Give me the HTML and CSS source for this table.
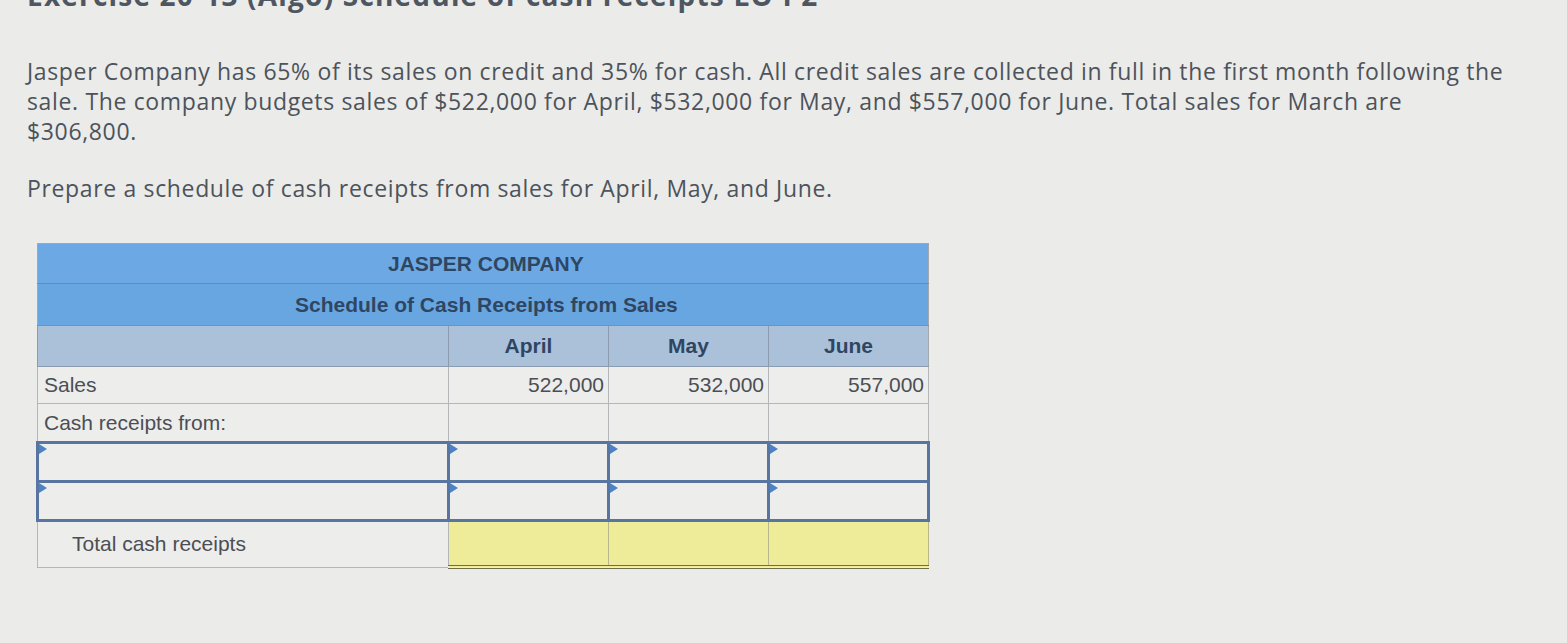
FILE: index.html
```html
<!DOCTYPE html>
<html>
<head>
<meta charset="utf-8">
<link rel="stylesheet" href="styles.css">
</head>
<body>
<div class="page">
  <h2 class="title">Exercise 20-13 (Algo) Schedule of cash receipts LO P2</h2>
  <p class="intro">Jasper Company has 65% of its sales on credit and 35% for cash. All credit sales are collected in full in the first month following the sale. The company budgets sales of $522,000 for April, $532,000 for May, and $557,000 for June. Total sales for March are $306,800.</p>
  <p class="task">Prepare a schedule of cash receipts from sales for April, May, and June.</p>
  <table class="sched">
    <colgroup>
      <col class="c-label"><col class="c-num"><col class="c-num"><col class="c-num">
    </colgroup>
    <tr class="r-h1"><th colspan="4">JASPER COMPANY</th></tr>
    <tr class="r-h2"><th colspan="4">Schedule of Cash Receipts from Sales</th></tr>
    <tr class="r-h3"><th></th><th>April</th><th>May</th><th>June</th></tr>
    <tr class="r-sales"><td class="lbl">Sales</td><td class="num">522,000</td><td class="num">532,000</td><td class="num">557,000</td></tr>
    <tr class="r-cash"><td class="lbl">Cash receipts from:</td><td></td><td></td><td></td></tr>
    <tr class="r-in"><td class="in"></td><td class="in"></td><td class="in"></td><td class="in"></td></tr>
    <tr class="r-in"><td class="in"></td><td class="in"></td><td class="in"></td><td class="in"></td></tr>
    <tr class="r-total"><td class="lbl indent">Total cash receipts</td><td class="tot"></td><td class="tot"></td><td class="tot"></td></tr>
  </table>
</div>
</body>
</html>
```
FILE: styles.css
```css
html, body {
  margin: 0;
  padding: 0;
  background: #ebebe9;
}
.page {
  padding: 0 0 0 27px;
  font-family: "Open Sans", "Liberation Sans", sans-serif;
  color: #4d535b;
  overflow: hidden;
  height: 643px;
}
.title {
  margin: -22px 0 44px 0;
  font-size: 28px;
  line-height: 34px;
  font-weight: 700;
  letter-spacing: 1.2px;
  color: #4e5662;
  white-space: nowrap;
}
.intro {
  margin: 0;
  width: 1482px;
  font-size: 23px;
  letter-spacing: 0.65px;
  line-height: 30px;
}
.task {
  margin: 27px 0 0 0;
  font-size: 23px;
  letter-spacing: 0.65px;
  line-height: 30px;
}
.sched {
  margin: 40px 0 0 9px;
  border-collapse: collapse;
  font-family: "Liberation Sans", Arial, sans-serif;
  font-size: 21px;
  table-layout: fixed;
  width: 892px;
  border: 1px solid #a4a8ad;
}
.c-label { width: 411px; }
.c-num { width: 160px; }
.sched th {
  font-weight: 700;
  color: #2f4663;
  padding: 0;
}
.r-h1 th {
  height: 39px;
  background: #6ca9e4;
  border-bottom: 1px solid #5d8fc4;
}
.r-h2 th {
  height: 41px;
  background: #68a6e2;
  border-bottom: 1px solid #7891ad;
}
.r-h1 th, .r-h2 th {
  text-align: left;
}
.r-h1 th { padding-left: 350px; }
.r-h2 th { padding-left: 257px; }
.r-h3 th {
  height: 40px;
  background: #abc1da;
  border-left: 1px solid #8c9cb0;
  border-bottom: 1px solid #8c9cb0;
  text-align: center;
}
.sched td {
  background: #ededeb;
  border: 1px solid #b4b6b8;
  color: #4b4f55;
  padding: 0;
}
.r-sales td { height: 36px; }
.r-cash td { height: 37px; }
.lbl {
  padding-left: 6px !important;
  text-align: left;
}
.indent { padding-left: 34px !important; }
.num {
  text-align: right;
  padding-right: 4px !important;
  vertical-align: middle;
}
.r-in td.in {
  height: 36px;
  border: 3px solid #5874a0;
  position: relative;
}
.r-in td.in::before {
  content: "";
  position: absolute;
  left: 0;
  top: 0;
  border-style: solid;
  border-width: 5px 0 5px 8px;
  border-color: transparent transparent transparent #4d82c4;
}
.r-total td { height: 43px; }
.r-total td.tot {
  background: #eeec98;
  border: 1px solid #b9b78a;
  border-bottom: 4px double #6e6f4a;
}
```
